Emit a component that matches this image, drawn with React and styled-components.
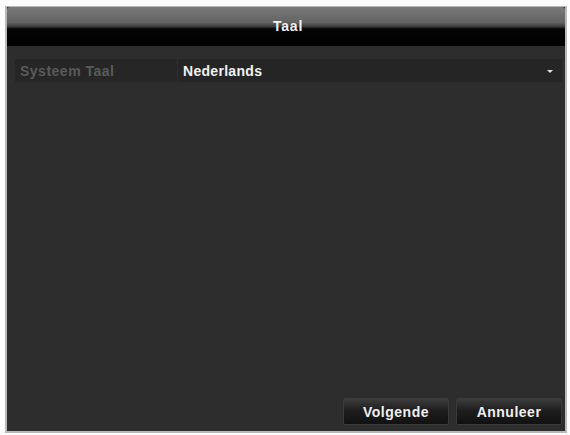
import React from "react";
import styled, { createGlobalStyle } from "styled-components";

const Global = createGlobalStyle`
  html, body { margin: 0; padding: 0; background: #ffffff; }
  body { font-family: "Liberation Sans", Arial, sans-serif; }
`;

const Page = styled.div`
  width: 570px;
  height: 435px;
  padding: 6px 3px 2px 5px;
  box-sizing: border-box;
  background: #fdfdfd;
`;

const Window = styled.div`
  height: 100%;
  display: flex;
  flex-direction: column;
  background: #2d2d2d;
  border: 2px solid #b9b9b9;
  border-top-width: 1px;
  box-sizing: border-box;
`;

const TitleBar = styled.div`
  height: 39px;
  flex: none;
  display: flex;
  align-items: center;
  justify-content: center;
  background: linear-gradient(
    to bottom,
    #7a7a7a 0%,
    #626262 40%,
    #3a3a3a 50%,
    #050505 56%,
    #000000 100%
  );
  border-radius: 3px 3px 0 0;
  color: #f0f0f0;
  font-weight: bold;
  font-size: 14px;
  letter-spacing: 0.8px;
  padding: 0 0 1px 4px;
  box-sizing: border-box;
`;

const Content = styled.div`
  flex: 1;
  display: flex;
  flex-direction: column;
  padding: 13px 3px 0 8px;
`;

const Row = styled.div`
  display: grid;
  grid-template-columns: 162px 1fr;
  gap: 1px;
  height: 23px;
  background: #2f2f2f;
`;

const Label = styled.div`
  background: #262626;
  color: #5a5a5a;
  font-size: 14px;
  font-weight: bold;
  letter-spacing: 0.5px;
  display: flex;
  align-items: center;
  padding-left: 5px;
`;

const Select = styled.div`
  background: #252525;
  color: #f2f2f2;
  font-size: 14px;
  font-weight: bold;
  letter-spacing: 0.3px;
  display: flex;
  align-items: center;
  justify-content: space-between;
  padding: 0 9px 0 5px;
`;

const Arrow = styled.span`
  width: 0;
  height: 0;
  border-left: 3px solid transparent;
  border-right: 3px solid transparent;
  border-top: 3px solid #e0e0e0;
  margin-top: 1px;
`;

const Footer = styled.div`
  display: flex;
  justify-content: flex-end;
  gap: 7px;
  padding: 0 0 6px 0;
  margin-top: auto;
`;

const Button = styled.button`
  width: 106px;
  height: 27px;
  border: 1px solid #3a3a3a;
  border-radius: 2px;
  background: linear-gradient(to bottom, #3c3c3c 0%, #1e1e1e 45%, #111111 100%);
  color: #f0f0f0;
  font-family: "Liberation Sans", Arial, sans-serif;
  font-weight: bold;
  font-size: 14px;
  letter-spacing: 0.5px;
  padding: 0;
  cursor: pointer;
`;

export default function App() {
  return (
    <>
      <Global />
      <Page>
        <Window>
          <TitleBar>Taal</TitleBar>
          <Content>
            <Row>
              <Label>Systeem Taal</Label>
              <Select>
                <span>Nederlands</span>
                <Arrow />
              </Select>
            </Row>
            <Footer>
              <Button>Volgende</Button>
              <Button>Annuleer</Button>
            </Footer>
          </Content>
        </Window>
      </Page>
    </>
  );
}
